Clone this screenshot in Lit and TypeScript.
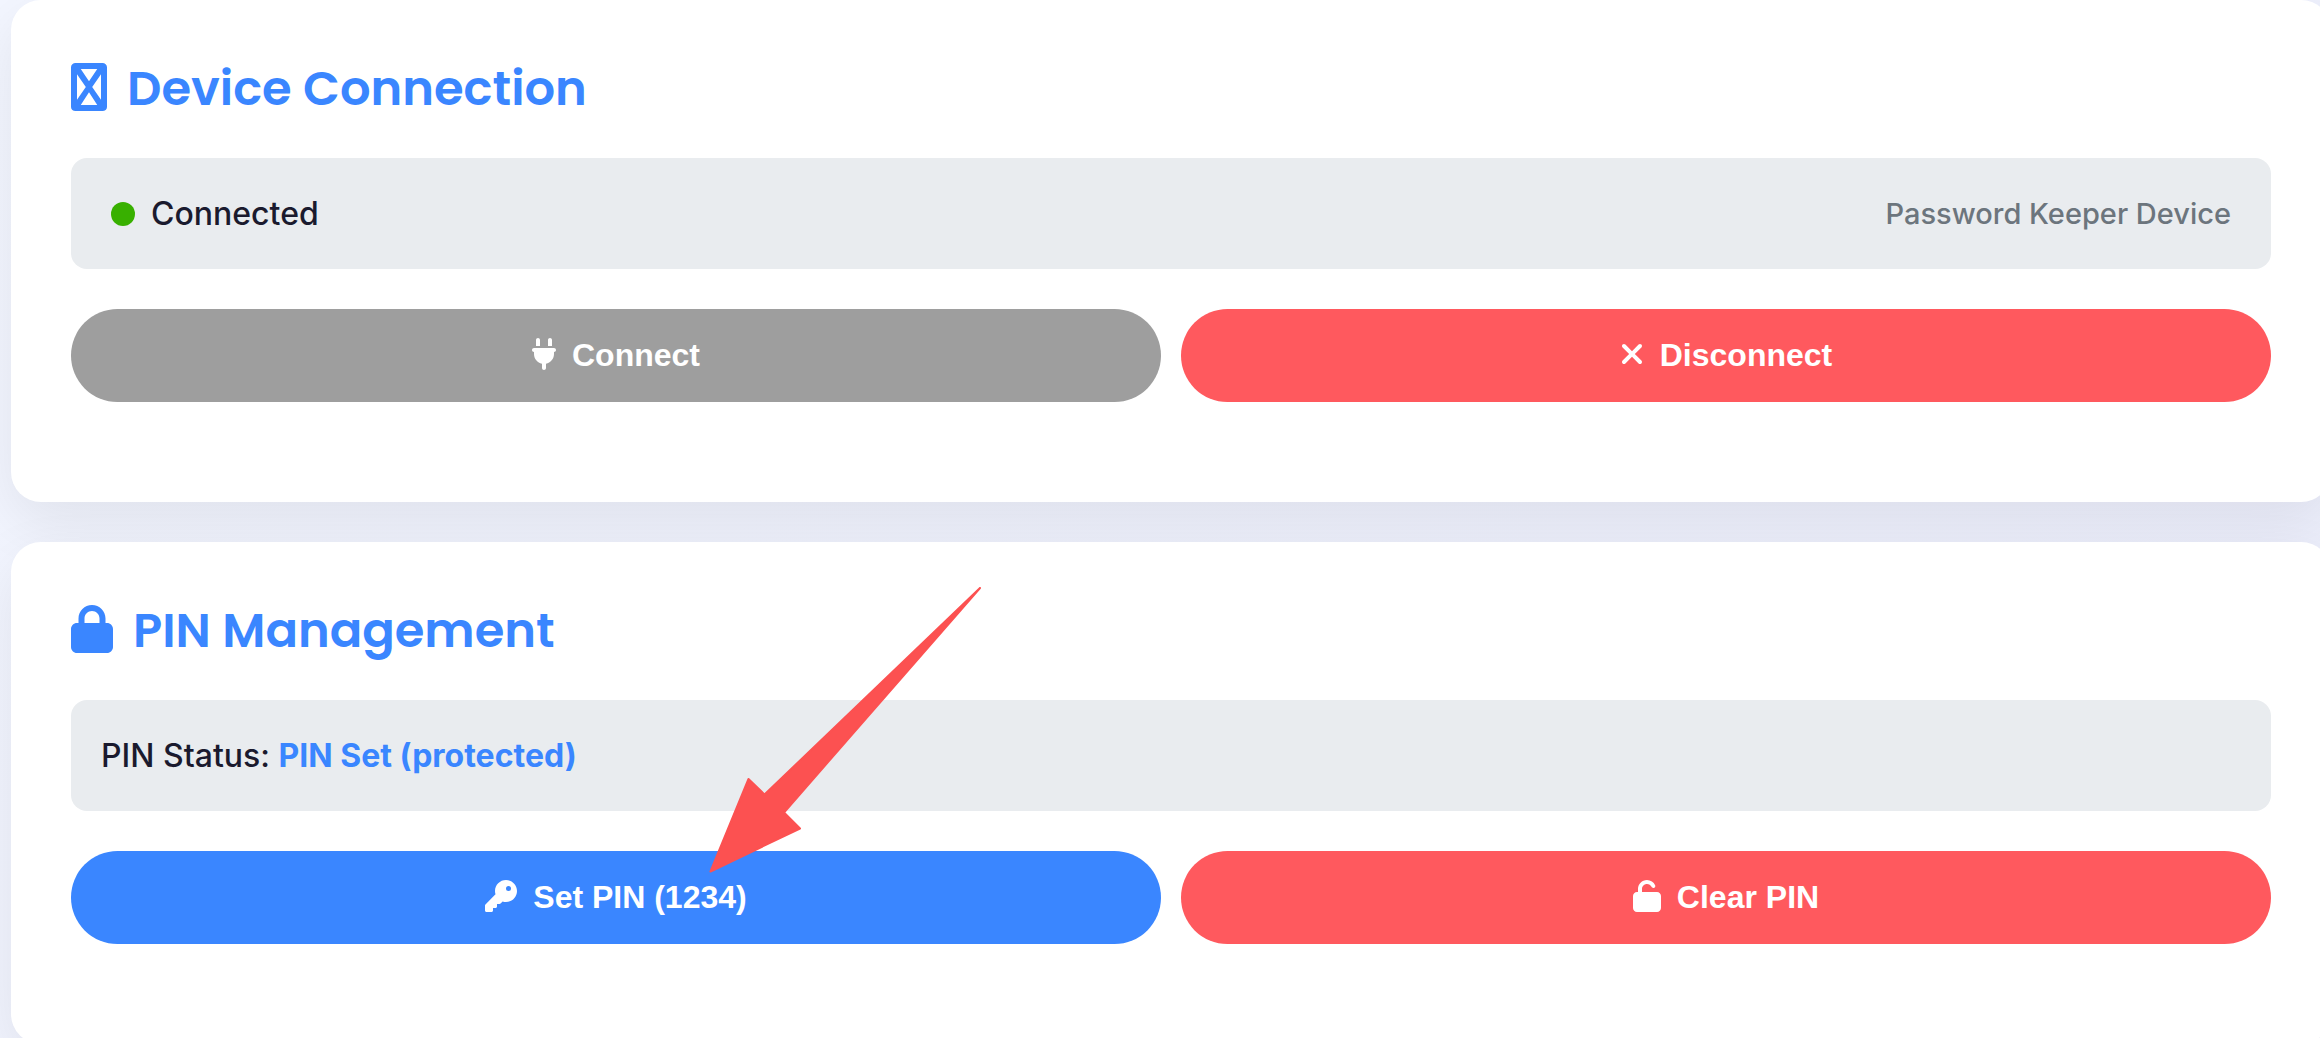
import { LitElement, html, css, svg } from "lit";
import { customElement, property } from "lit/decorators.js";

const ICONS: Record<string, { width: number; path: string }> = {
  device: {
    width: 384,
    path: "M48 0H336C362 0 384 18 384 44V468C384 494 362 512 336 512H48C22 512 0 494 0 468V44C0 18 22 0 48 0ZM104 64L192 195L280 64ZM64 119V393L158 256ZM320 119L226 256L320 393ZM192 313L104 448H280Z",
  },
  lock: {
    width: 448,
    path: "M144 144v48H304V144c0-44.2-35.8-80-80-80s-80 35.8-80 80zM80 192V144C80 64.5 144.5 0 224 0s144 64.5 144 144v48h16c35.3 0 64 28.7 64 64V448c0 35.3-28.7 64-64 64H64c-35.3 0-64-28.7-64-64V256c0-35.3 28.7-64 64-64H80z",
  },
  unlock: {
    width: 448,
    path: "M144 144c0-44.2 35.8-80 80-80c31.9 0 59.4 18.6 72.3 45.7c7.6 16 26.7 22.8 42.6 15.2s22.8-26.7 15.2-42.6C331 33.7 281.5 0 224 0C144.5 0 80 64.5 80 144v48H64c-35.3 0-64 28.7-64 64V448c0 35.3 28.7 64 64 64H384c35.3 0 64-28.7 64-64V256c0-35.3-28.7-64-64-64H144V144z",
  },
  plug: {
    width: 384,
    path: "M96 0C78.3 0 64 14.3 64 32v96h64V32c0-17.7-14.3-32-32-32zM288 0c-17.7 0-32 14.3-32 32v96h64V32c0-17.7-14.3-32-32-32zM32 160c-17.7 0-32 14.3-32 32s14.3 32 32 32v32c0 77.4 55 142 128 156.8V480c0 17.7 14.3 32 32 32s32-14.3 32-32V412.8C297 398 352 333.4 352 256V224c17.7 0 32-14.3 32-32s-14.3-32-32-32H32z",
  },
  xmark: {
    width: 384,
    path: "M342.6 150.6c12.5-12.5 12.5-32.8 0-45.3s-32.8-12.5-45.3 0L192 210.7 86.6 105.4c-12.5-12.5-32.8-12.5-45.3 0s-12.5 32.8 0 45.3L146.7 256 41.4 361.4c-12.5 12.5-12.5 32.8 0 45.3s32.8 12.5 45.3 0L192 301.3 297.4 406.6c12.5 12.5 32.8 12.5 45.3 0s12.5-32.8 0-45.3L237.3 256 342.6 150.6z",
  },
  key: {
    width: 512,
    path: "M336 352c97.2 0 176-78.8 176-176S433.2 0 336 0S160 78.8 160 176c0 18.7 2.9 36.8 8.3 53.7L7 391c-4.5 4.5-7 10.6-7 17v80c0 13.3 10.7 24 24 24h80c13.3 0 24-10.7 24-24V448h40c13.3 0 24-10.7 24-24V384h40c6.4 0 12.5-2.5 17-7l33.3-33.3c16.9 5.4 35 8.3 53.7 8.3zM376 96a40 40 0 1 1 0 80 40 40 0 1 1 0-80z",
  },
};

/** Solid glyph, one em high, hanging slightly below the text baseline. */
@customElement("app-icon")
export class AppIcon extends LitElement {
  static styles = css`
    :host {
      display: inline-block;
      height: 1em;
      vertical-align: -0.125em;
      line-height: 1;
    }
    .glyph {
      display: block;
      height: 1em;
      fill: currentColor;
    }
  `;

  @property() name = "lock";

  render() {
    const icon = ICONS[this.name];
    return html`<svg class="glyph" viewBox="0 0 ${icon.width} 512" aria-hidden="true">
      ${svg`<path fill-rule="evenodd" d=${icon.path} />`}
    </svg>`;
  }
}

@customElement("app-root")
export class AppRoot extends LitElement {
  static styles = css`
    :host {
      display: block;
      position: relative;
      height: 100vh;
      overflow: hidden;
      background: linear-gradient(135deg, #f3f6ff, #eceefc);
      color: #1a1a2e;
      font-family: Inter, "Liberation Sans", sans-serif;
      font-size: 32px;
      line-height: 51px;
    }
    .page {
      display: flex;
      flex-direction: column;
      gap: 40px;
      margin: 0 -11px 0 11px;
    }
    .card {
      padding: 60px 60px 100px;
      border-radius: 30px;
      background: #fff;
      box-shadow: 0 20px 60px rgba(0, 0, 0, 0.08);
    }
    .title {
      margin: 0 0 40px;
      color: #3a86ff;
      font-family: Poppins, Inter, sans-serif;
      font-size: 48px;
      font-weight: 600;
      line-height: 58px;
    }
    .title app-icon {
      margin-right: 20px;
    }
    .status {
      display: flex;
      align-items: center;
      justify-content: space-between;
      padding: 30px 40px;
      margin-bottom: 40px;
      border-radius: 16px;
      background: #e9ecef;
      font-weight: 500;
    }
    .status.plain {
      display: block;
      padding: 30px;
    }
    .state {
      display: flex;
      align-items: center;
      gap: 16px;
    }
    .dot {
      width: 24px;
      height: 24px;
      border-radius: 50%;
      background: #38b000;
    }
    .device {
      color: #6c757d;
      font-size: 29px;
    }
    .value {
      color: #3a86ff;
      font-weight: 700;
    }
    .actions {
      display: grid;
      grid-template-columns: 1fr 1fr;
      gap: 20px;
    }
    .btn {
      padding: 28px 40px;
      border: 0;
      border-radius: 50px;
      color: #fff;
      font: 700 32px/37px "Liberation Sans", Arial, sans-serif;
      text-align: center;
    }
    .btn app-icon {
      margin-right: 16px;
    }
    .primary {
      background: #3a86ff;
    }
    .danger {
      background: #ff595e;
    }
    .btn:disabled {
      background: #9e9e9e;
    }
    .pointer {
      position: absolute;
      left: 709px;
      top: 587px;
      width: 272px;
      height: 286px;
      fill: #fc5151;
      stroke: #fc5151;
      stroke-width: 2;
      stroke-linejoin: round;
      pointer-events: none;
    }
  `;

  render() {
    return html`
      <main class="page">
        <section class="card">
          <h2 class="title"><app-icon name="device"></app-icon>Device Connection</h2>
          <div class="status">
            <span class="state"><span class="dot"></span>Connected</span>
            <span class="device">Password Keeper Device</span>
          </div>
          <div class="actions">
            <button class="btn" type="button" disabled><app-icon name="plug"></app-icon>Connect</button>
            <button class="btn danger" type="button"><app-icon name="xmark"></app-icon>Disconnect</button>
          </div>
        </section>
        <section class="card">
          <h2 class="title"><app-icon name="lock"></app-icon>PIN Management</h2>
          <div class="status plain">PIN Status: <span class="value">PIN Set (protected)</span></div>
          <div class="actions">
            <button class="btn primary" type="button"><app-icon name="key"></app-icon>Set PIN (1234)</button>
            <button class="btn danger" type="button"><app-icon name="unlock"></app-icon>Clear PIN</button>
          </div>
        </section>
      </main>
      <svg class="pointer" viewBox="0 0 272 286" aria-hidden="true">
        <path d="M1.500 284.500L39.500 192L55.500 207.500L271 1L75 225.500L91 241.500Z" />
      </svg>
    `;
  }
}
